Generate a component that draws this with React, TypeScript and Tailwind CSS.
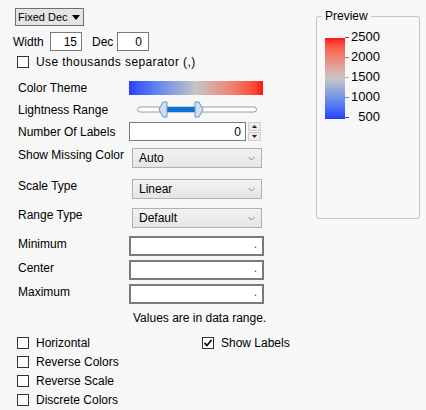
import React from 'react';

const font = { fontFamily: '"Liberation Sans", Arial, sans-serif' };

const Checkbox: React.FC<{ checked?: boolean }> = ({ checked }) => (
  <span className="flex h-[12px] w-[12px] shrink-0 items-center justify-center border border-[#333] bg-white">
    {checked && (
      <svg width="10" height="10" viewBox="0 0 10 10">
        <path d="M1.5 5 L4 7.5 L8.5 2" fill="none" stroke="#111" strokeWidth="1.8" />
      </svg>
    )}
  </span>
);

const Select: React.FC<{ value: string }> = ({ value }) => (
  <div className="ml-[3px] flex h-[20px] w-[130px] items-center justify-between border border-[#b0b0b0] bg-gradient-to-b from-[#f2f2f2] to-[#e5e5e5] pl-[6px] pr-[6px] text-[12px] text-black">
    <span>{value}</span>
    <svg width="7" height="5" viewBox="0 0 7 5">
      <path d="M0.5 1 L3.5 4 L6.5 1" fill="none" stroke="#888" strokeWidth="1" />
    </svg>
  </div>
);

const DotInput: React.FC = () => (
  <div className="flex h-[20px] w-[135px] items-center justify-end border-2 border-[#7a7a7a] bg-white pr-[5px] text-[12px] leading-none">
    <span className="-mt-[4px] text-[#3344aa]">.</span>
  </div>
);

const Row: React.FC<{ label: string; className?: string; labelClass?: string; children: React.ReactNode }> = ({
  label,
  className = '',
  labelClass = 'self-center',
  children,
}) => (
  <div className={`flex ${className}`}>
    <div className={`w-[129px] shrink-0 pl-[18px] text-[12px] leading-[14px] ${labelClass}`}>{label}</div>
    {children}
  </div>
);

const ticks = [
  { v: '2500', c: '#e82020' },
  { v: '2000', c: '#d06a6a' },
  { v: '1500', c: '#b4b4b4' },
  { v: '1000', c: '#7a80d0' },
  { v: '500', c: '#3040f0' },
];

const App: React.FC = () => {
  return (
    <div className="flex h-[410px] w-[426px] bg-[#f7f7f7] text-black" style={font}>
      {/* Left settings column */}
      <div className="flex w-[300px] flex-col">
        <div className="ml-[15px] mt-[8px] flex h-[18px] w-[69px] items-center gap-[4px] whitespace-nowrap border border-[#707070] bg-[#e4e4e4] pl-[2px] text-[11px]">
          <span>Fixed Dec</span>
          <svg width="8" height="5" viewBox="0 0 8 5" className="shrink-0">
            <path d="M0 0 H8 L4 5 Z" fill="#000" />
          </svg>
        </div>

        <div className="mt-[6px] flex h-[19px] items-center text-[12px]">
          <span className="ml-[13px] w-[37px]">Width</span>
          <div className="flex h-[19px] w-[32px] items-center justify-end border border-[#7a7a7a] bg-white pr-[4px]">15</div>
          <span className="ml-[10px] w-[25px]">Dec</span>
          <div className="flex h-[19px] w-[32px] items-center justify-end border border-[#7a7a7a] bg-white pr-[6px]">0</div>
        </div>

        <div className="mt-[4px] flex h-[14px] items-center pl-[17px]">
          <Checkbox />
          <span className="ml-[7px] text-[12px] tracking-[0.4px]">Use thousands separator (,)</span>
        </div>

        <Row label="Color Theme" className="mt-[12px] h-[14px]">
          <div className="h-[14px] w-[134px] bg-gradient-to-r from-[#2f3cff] via-[#c4c4c4] to-[#ff0f0f]" />
        </Row>

        <Row label="Lightness Range" className="mt-[6px] h-[18px]">
          <div className="ml-[8px] flex items-center">
            <svg width="121" height="18" viewBox="0 0 121 18">
              <rect x="0.5" y="6" width="119" height="5" rx="2.5" fill="#fff" stroke="#9a9a9a" />
              <rect x="29" y="6" width="30" height="5" fill="#0a74d4" />
              <path d="M30 1 H26 L22 8.5 L26 16 H30 Z" fill="#cfe0f2" stroke="#6f93c0" />
              <path d="M58 1 H62 L66 8.5 L62 16 H58 Z" fill="#cfe0f2" stroke="#6f93c0" />
            </svg>
          </div>
        </Row>

        <Row label="Number Of Labels" className="mt-[3px] h-[19px]">
          <div className="flex h-[19px] w-[117px] items-center justify-end border border-[#7a7a7a] bg-white pr-[4px] text-[12px]">0</div>
          <div className="ml-[2px] flex h-[19px] w-[13px] flex-col justify-between">
            <div className="flex h-[9px] items-center justify-center border border-[#d0d0d0] bg-[#ececec]">
              <svg width="5" height="3" viewBox="0 0 5 3"><path d="M0 3 L2.5 0 L5 3 Z" fill="#222" /></svg>
            </div>
            <div className="flex h-[9px] items-center justify-center border border-[#d0d0d0] bg-[#ececec]">
              <svg width="5" height="3" viewBox="0 0 5 3"><path d="M0 0 L2.5 3 L5 0 Z" fill="#222" /></svg>
            </div>
          </div>
        </Row>

        <Row label="Show Missing Color" className="mt-[7px] h-[20px]" labelClass="pt-0">
          <Select value="Auto" />
        </Row>

        <Row label="Scale Type" className="mt-[11px] h-[20px]" labelClass="pt-0">
          <Select value="Linear" />
        </Row>

        <Row label="Range Type" className="mt-[9px] h-[20px]" labelClass="pt-0">
          <Select value="Default" />
        </Row>

        <Row label="Minimum" className="mt-[8px] h-[20px]" labelClass="pt-[1px]">
          <DotInput />
        </Row>
        <Row label="Center" className="mt-[4px] h-[20px]" labelClass="pt-[1px]">
          <DotInput />
        </Row>
        <Row label="Maximum" className="mt-[4px] h-[20px]" labelClass="pt-[1px]">
          <DotInput />
        </Row>

        <div className="ml-[133px] mt-[6px] h-[16px] text-[12px] leading-[16px]">Values are in data range.</div>

        <div className="mt-[7px] flex">
          <div className="flex w-[202px] flex-col">
            {['Horizontal', 'Reverse Colors', 'Reverse Scale', 'Discrete Colors'].map(l => (
              <div key={l} className="flex h-[19px] items-center pl-[17px]">
                <Checkbox />
                <span className="ml-[7px] text-[12px]">{l}</span>
              </div>
            ))}
          </div>
          <div className="flex h-[19px] items-center">
            <Checkbox checked />
            <span className="ml-[7px] text-[12px]">Show Labels</span>
          </div>
        </div>
      </div>

      {/* Preview group */}
      <div className="ml-[16px] mt-[16px] h-[203px] w-[104px] rounded-[3px] border border-[#c4c4c4]">
        <div className="-mt-[9px] ml-[5px] w-fit bg-[#f7f7f7] px-[3px] text-[12px] leading-[16px]">Preview</div>
        <div className="ml-[8px] mt-[14px] flex">
          <div className="h-[81px] w-[20px] bg-gradient-to-b from-[#ff0e0e] via-[#c6c6c6] to-[#2a3aff]" />
          <div className="flex flex-col">
            {ticks.map((t, i) => (
              <div key={t.v} className={`flex h-[20px] items-start ${i === 0 ? '-mt-[1px]' : ''}`}>
                <div className="h-px w-[4px]" style={{ backgroundColor: t.c }} />
                <span className="-mt-[8px] w-[31px] text-right text-[13px] leading-[16px]">{t.v}</span>
              </div>
            ))}
          </div>
        </div>
      </div>
    </div>
  );
};

export default App;
